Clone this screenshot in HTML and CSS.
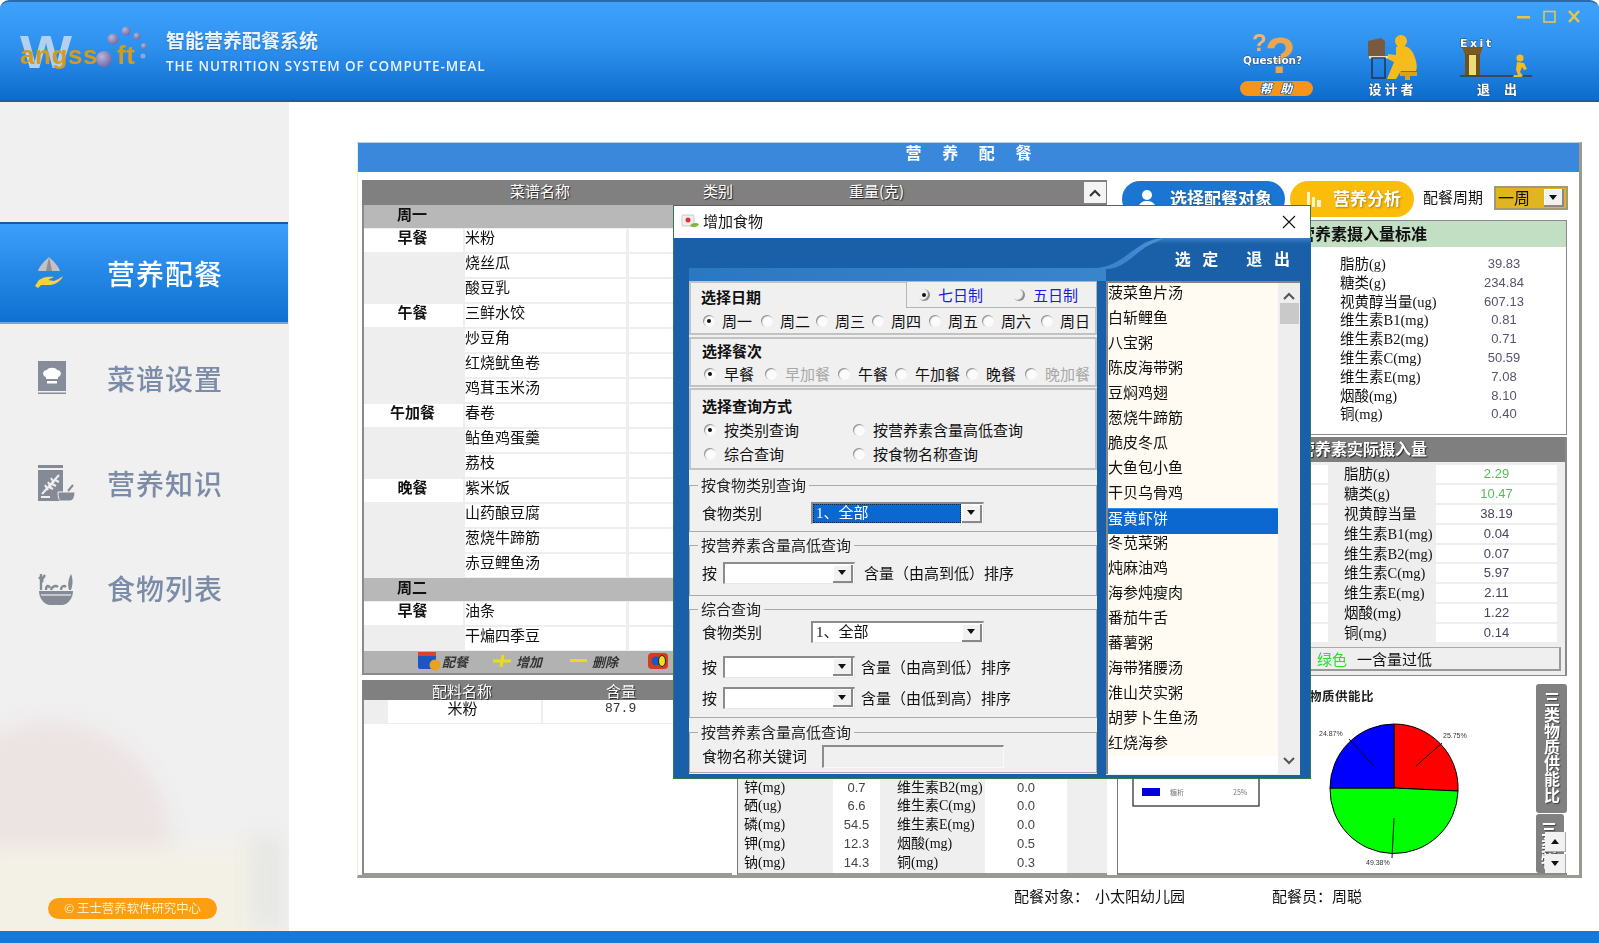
FILE: index.html
```html
<!DOCTYPE html>
<html lang="zh">
<head>
<meta charset="utf-8">
<title>智能营养配餐系统</title>
<link rel="stylesheet" href="styles.css">
</head>
<body>
<div class="app">
  <header class="topbar">
    <svg class="logo" viewBox="16 14 134 62" width="134" height="62">
      <defs><radialGradient id="ball" cx="35%" cy="35%" r="70%"><stop offset="0" stop-color="#b9b6d8"/><stop offset="1" stop-color="#6d6aa8"/></radialGradient></defs>
      <text x="20" y="68" class="logo-w" textLength="52" lengthAdjust="spacingAndGlyphs">W</text>
      <text x="20" y="64" class="logo-a">angss</text>
      <circle cx="104" cy="59" r="8" fill="url(#ball)"/>
      <text x="117" y="64" class="logo-a">ft</text>
      <circle cx="113" cy="39" r="5.5" fill="url(#ball)"/>
      <circle cx="126" cy="31" r="4.5" fill="url(#ball)"/>
      <circle cx="137" cy="36" r="3.5" fill="url(#ball)"/>
      <circle cx="144" cy="46" r="3" fill="url(#ball)"/>
      <circle cx="143" cy="56" r="2.5" fill="#8fa6d6"/>
    </svg>
    <div class="brand">
      <div class="brand-cn">智能营养配餐系统</div>
      <div class="brand-en">THE NUTRITION SYSTEM OF COMPUTE-MEAL</div>
    </div>
    <div class="tools">
      <svg class="tool-help" viewBox="1236 0 80 102" width="80" height="102">
        <text x="1252" y="51" class="q-small">?</text>
        <text x="1265" y="73" class="q-big">?</text>
        <text x="1243" y="64" class="q-text">Question?</text>
        <rect x="1240" y="81" width="73" height="15" rx="7.5" fill="#f7941a"/>
        <text x="1276" y="93" class="tool-label small">帮 助</text>
      </svg>
      <svg class="tool-design" viewBox="1360 0 65 102" width="65" height="102">
        <path d="M1368 41l13-3 4 3v15h-17z" fill="#7a5a3c"/>
        <rect x="1369" y="56" width="27" height="2.5" fill="#e8e2c8"/>
        <rect x="1372" y="58" width="13" height="20" fill="none" stroke="#20304a" stroke-width="1.4"/>
        <circle cx="1401" cy="41" r="6" fill="#f6bc1c"/>
        <path d="M1396 47c5-3 14-1 17 6 3 6 5 14 3 18h-15l-5 8h-9l7-17-6-3v-5l8 1z" fill="#f6bc1c"/>
        <path d="M1400 72h17v4h-7v4h-5v-4h-5z" fill="#d9a414"/>
        <text x="1391" y="94" class="tool-label">设 计 者</text>
      </svg>
      <svg class="tool-exit" viewBox="1455 0 80 102" width="80" height="102">
        <text x="1460" y="47" class="exit-text">Exit</text>
        <path d="M1462 47h21l-3 8h-15z" fill="#7a5a22"/>
        <rect x="1465" y="54" width="15" height="22" fill="#6b5220"/>
        <rect x="1469" y="55" width="7" height="21" fill="#efdc78"/>
        <rect x="1460" y="75" width="72" height="2" fill="#3a4a5a"/>
        <circle cx="1520" cy="58" r="3.6" fill="#f6bc1c"/>
        <path d="M1517 62l7 1 3 6-3 1-2-3-2 5 3 4-2 1h-8l1-2h4l-2-5z" fill="#f6bc1c"/>
        <text x="1497" y="94" class="tool-label">退 出</text>
      </svg>
    </div>
    <svg class="winctl" viewBox="0 0 68 16" width="68" height="16">
      <rect x="2" y="8" width="13" height="2.5" fill="#e4c648"/>
      <rect x="29" y="3.5" width="11" height="10.5" fill="none" stroke="#e4c648" stroke-width="1.6"/>
      <line x1="54" y1="3" x2="64" y2="14" stroke="#e4c648" stroke-width="2.6"/>
      <line x1="64" y1="3" x2="54" y2="14" stroke="#e4c648" stroke-width="2.6"/>
    </svg>
  </header>

  <div class="middle">
    <aside class="sidebar">
      <div class="side-deco deco-red"></div>
      <div class="side-deco deco-beige"></div>
      <div class="side-deco deco-gray"></div>
      <nav class="nav">
        <a class="nav-item active">
          <span class="nav-icon">
            <svg viewBox="0 0 32 36" width="32" height="36">
              <path d="M5 16C7 10 12 6 16 2c4 4 9 8 11 14z" fill="#c2c2c2"/>
              <path d="M16 2l-3 14h6z" fill="#8f8f92"/>
              <path d="M2 31l4-6c4-3 9-4 15-3l-6 3 6 1c3-1 6-3 9-5-2 5-7 8-12 9H8l-3 3z" fill="#f3d53a"/>
            </svg>
          </span>
          <span>营养配餐</span>
        </a>
        <a class="nav-item">
          <span class="nav-icon">
            <svg viewBox="0 0 30 36" width="30" height="36">
              <rect x="1" y="1" width="28" height="33" fill="#878d98"/>
              <rect x="1" y="31" width="28" height="1.5" fill="#f0f0f0"/>
              <path d="M9 17c-4-1-4-7 1-7 1-3 9-3 10 0 5 0 5 6 1 7v2H9z" fill="#fff"/>
              <rect x="10" y="21" width="10" height="2.5" fill="#fff"/>
            </svg>
          </span>
          <span>菜谱设置</span>
        </a>
        <a class="nav-item">
          <span class="nav-icon">
            <svg viewBox="0 0 38 38" width="38" height="38">
              <rect x="1" y="1" width="25" height="3" fill="#858b96"/>
              <rect x="1" y="6" width="25" height="31" fill="#858b96"/>
              <path d="M5 30L22 11M8 21l3 5M11 18l3 5M14 14l3 5M16 25l-4-2M19 22l-4-2M22 18l-4-2" stroke="#f0f0f0" stroke-width="2" fill="none"/>
              <rect x="4" y="32" width="9" height="2" fill="#f0f0f0"/>
              <path d="M21 28h17c0 5-2 9-5 9h-9c-2 0-3-4-3-9z" fill="#858b96" stroke="#f0f0f0"/>
              <path d="M31 27l5-6" stroke="#858b96" stroke-width="2"/>
            </svg>
          </span>
          <span>营养知识</span>
        </a>
        <a class="nav-item">
          <span class="nav-icon">
            <svg viewBox="0 0 38 36" width="38" height="36">
              <path d="M2 21h34c0 8-6 14-11 14H13C8 35 2 29 2 21z" fill="#858b96"/>
              <path d="M4 25h30" stroke="#f0f0f0" stroke-width="1.2"/>
              <path d="M4 20V4M2 7l4 5M8 5l-4 6M9 20c0-5 3-5 4-2M14 20c1-4 5-5 7-3M24 20c0-4 3-5 5-3" stroke="#858b96" stroke-width="2.4" fill="none"/>
              <path d="M32 20c-2-6 0-12 2-16 2 4 2 11 0 16z" fill="#858b96"/>
            </svg>
          </span>
          <span>食物列表</span>
        </a>
      </nav>
      <div class="copyright">© 王士营养软件研究中心</div>
    </aside>

    <main class="content">
      <section class="panel">
        <h1 class="panel-title">营 养 配 餐</h1>
        <div class="panel-body">
          <div class="col-left">
            <div class="menu-table">
              <div class="mt-head">
                <span class="mh-name">菜谱名称</span>
                <span class="mh-type">类别</span>
                <span class="mh-weight">重量(克)</span>
                <span class="scroll-up"><svg viewBox="0 0 12 8" width="12" height="8"><path d="M1 7l5-5 5 5" fill="none" stroke="#333" stroke-width="2"/></svg></span>
              </div>
              <div class="mt-day">周一</div>
              <div class="mt-row lead"><b>早餐</b><span>米粉</span><i></i></div>
              <div class="mt-row"><b></b><span>烧丝瓜</span><i></i></div>
              <div class="mt-row"><b></b><span>酸豆乳</span><i></i></div>
              <div class="mt-row lead"><b>午餐</b><span>三鲜水饺</span><i></i></div>
              <div class="mt-row"><b></b><span>炒豆角</span><i></i></div>
              <div class="mt-row"><b></b><span>红烧鱿鱼卷</span><i></i></div>
              <div class="mt-row"><b></b><span>鸡茸玉米汤</span><i></i></div>
              <div class="mt-row lead"><b>午加餐</b><span>春卷</span><i></i></div>
              <div class="mt-row"><b></b><span>鲇鱼鸡蛋羹</span><i></i></div>
              <div class="mt-row"><b></b><span>荔枝</span><i></i></div>
              <div class="mt-row lead"><b>晚餐</b><span>紫米饭</span><i></i></div>
              <div class="mt-row"><b></b><span>山药酿豆腐</span><i></i></div>
              <div class="mt-row"><b></b><span>葱烧牛蹄筋</span><i></i></div>
              <div class="mt-row"><b></b><span>赤豆鲤鱼汤</span><i></i></div>
              <div class="mt-day">周二</div>
              <div class="mt-row lead"><b>早餐</b><span>油条</span><i></i></div>
              <div class="mt-row"><b></b><span>干煸四季豆</span><i></i></div>
              <div class="mt-tools">
                <svg class="ti ti-peican" viewBox="0 0 24 22" width="24" height="22"><rect x="1" y="2" width="18" height="17" rx="2" fill="#1f55c0"/><rect x="1" y="2" width="18" height="4" fill="#d8432a"/><circle cx="18" cy="15" r="5.5" fill="#e8a220"/></svg>
                <span>配餐</span>
                <svg class="ti ti-add" viewBox="0 0 20 14" width="20" height="14"><path d="M1 7h18M11 1l-2 12" stroke="#e8dc20" stroke-width="3" fill="none"/></svg>
                <span>增加</span>
                <svg class="ti ti-del" viewBox="0 0 18 6" width="18" height="6"><rect x="0" y="1" width="17" height="3" fill="#e8dc20"/></svg>
                <span>删除</span>
                <svg class="ti ti-co" viewBox="0 0 22 18" width="22" height="18"><rect x="1" y="1" width="20" height="16" rx="4" fill="#d83a1c"/><circle cx="9" cy="9" r="4.5" fill="#1f55c0"/><ellipse cx="15" cy="9" rx="3.5" ry="5.5" fill="#e8e020" stroke="#222"/></svg>
              </div>
            </div>
            <div class="lower">
              <div class="ingredients">
                <div class="ing-head"><span class="ih-a">配料名称</span><span class="ih-b">含量</span></div>
                <div class="ing-row"><em></em><span class="ir-a">米粉</span><span class="ir-b">87.9</span></div>
              </div>
              <div class="nutr-table">
                <div class="nt-row"><span>锌(mg)</span><span class="v">0.7</span><span class="l2">维生素B2(mg)</span><span class="v">0.0</span></div>
                <div class="nt-row"><span>硒(ug)</span><span class="v">6.6</span><span class="l2">维生素C(mg)</span><span class="v">0.0</span></div>
                <div class="nt-row"><span>磷(mg)</span><span class="v">54.5</span><span class="l2">维生素E(mg)</span><span class="v">0.0</span></div>
                <div class="nt-row"><span>钾(mg)</span><span class="v">12.3</span><span class="l2">烟酸(mg)</span><span class="v">0.5</span></div>
                <div class="nt-row"><span>钠(mg)</span><span class="v">14.3</span><span class="l2">铜(mg)</span><span class="v">0.3</span></div>
              </div>
            </div>
          </div>

          <div class="col-right">
            <div class="actions">
              <a class="pill pill-blue">
                <svg viewBox="0 0 20 20" width="20" height="20"><circle cx="10" cy="6" r="5" fill="#fff"/><path d="M1 20c1-7 5-8 9-8s8 1 9 8z" fill="#fff"/></svg>
                <span>选择配餐对象</span>
              </a>
              <a class="pill pill-orange">
                <svg viewBox="0 0 16 16" width="16" height="16"><path d="M1 1h3v15H1zM6 6h3v10H6zM11 9h4v7h-4z" fill="#fff3c8"/></svg>
                <span>营养分析</span>
              </a>
              <span class="period-label">配餐周期</span>
              <div class="period"><span>一周</span><i class="arrow-btn"></i></div>
            </div>

            <div class="std-panel">
              <h2>营养素摄入量标准</h2>
              <div class="std-rows">
                <div><span>脂肪(g)</span><em>39.83</em></div>
                <div><span>糖类(g)</span><em>234.84</em></div>
                <div><span>视黄醇当量(ug)</span><em>607.13</em></div>
                <div><span>维生素B1(mg)</span><em>0.81</em></div>
                <div><span>维生素B2(mg)</span><em>0.71</em></div>
                <div><span>维生素C(mg)</span><em>50.59</em></div>
                <div><span>维生素E(mg)</span><em>7.08</em></div>
                <div><span>烟酸(mg)</span><em>8.10</em></div>
                <div><span>铜(mg)</span><em>0.40</em></div>
              </div>
            </div>

            <div class="act-panel">
              <h2>营养素实际摄入量</h2>
              <div class="act-rows">
                <div><i></i><span>脂肪(g)</span><em class="low">2.29</em></div>
                <div><i></i><span>糖类(g)</span><em class="low">10.47</em></div>
                <div><i></i><span>视黄醇当量</span><em>38.19</em></div>
                <div><i></i><span>维生素B1(mg)</span><em>0.04</em></div>
                <div><i></i><span>维生素B2(mg)</span><em>0.07</em></div>
                <div><i></i><span>维生素C(mg)</span><em>5.97</em></div>
                <div><i></i><span>维生素E(mg)</span><em>2.11</em></div>
                <div><i></i><span>烟酸(mg)</span><em>1.22</em></div>
                <div><i></i><span>铜(mg)</span><em>0.14</em></div>
              </div>
              <div class="act-legend"><span class="green">绿色</span><span>一含量过低</span></div>
            </div>

            <div class="chart-box">
              <svg class="chart" viewBox="0 0 418 190" width="418" height="190">
                <text x="165" y="17" class="chart-title">三类物质供能比</text>
                <rect x="15" y="60" width="126" height="62" fill="#fff" stroke="#222" stroke-width="1.2"/>
                <rect x="24" y="85" width="18" height="7" fill="#00c000" stroke="#063"/>
                <rect x="24" y="104" width="18" height="8" fill="#0000d8"/>
                <text x="52" y="111" class="tiny">糖析</text>
                <text x="115" y="111" class="tiny">25%</text>
                <g transform="translate(-2 0)">
                  <path d="M278 104V40A64 64 0 0 1 342 107Z" fill="#f00" stroke="#000"/>
                  <path d="M278 104L342 107A64 64 0 0 1 214 104Z" fill="#0f0" stroke="#000"/>
                  <path d="M278 104H214A64 64 0 0 1 278 40Z" fill="#00f" stroke="#000"/>
                  <path d="M233 55l25 27M326 59l-26 23M278 134l-2 40" stroke="#111" fill="none"/>
                </g>
                <text x="201" y="52" class="tiny2">24.87%</text>
                <text x="325" y="54" class="tiny2">25.75%</text>
                <text x="248" y="181" class="tiny2">49.38%</text>
              </svg>
              <div class="vtabs">
                <div class="vtab vtab-a">三类物质供能比</div>
                <div class="vtab vtab-b">三类物质供能比</div>
              </div>
              <div class="spin">
                <span class="spin-btn"><i class="tri up"></i></span>
                <span class="spin-btn"><i class="tri"></i></span>
              </div>
            </div>
          </div>
        </div>
      </section>
      <div class="info-line">
        <span>配餐对象：</span><span class="who">小太阳幼儿园</span><span class="who2">配餐员：</span><span class="who3">周聪</span>
      </div>
    </main>
  </div>
  <footer class="bottombar"></footer>

  <div class="dialog">
    <div class="dlg-title">
      <svg viewBox="0 0 20 16" width="20" height="16"><rect x="1" y="2" width="12" height="11" rx="1" fill="#eee" stroke="#ccc"/><circle cx="7" cy="7" r="2.5" fill="#e03030"/><path d="M9 13c1-3 6-4 9-2-1 3-5 4-9 2z" fill="#7ab83a"/></svg>
      <span>增加食物</span>
      <svg class="dlg-x" viewBox="0 0 14 14" width="14" height="14"><path d="M1 1l12 12M13 1L1 13" stroke="#111" stroke-width="1.1"/></svg>
    </div>
    <div class="dlg-body">
      <div class="dlg-head">
        <svg class="wave" viewBox="0 0 637 43" width="637" height="43" preserveAspectRatio="none">
          <defs>
            <linearGradient id="strip" x1="0" x2="1" y1="0" y2="0"><stop offset="0" stop-color="#2b78c2"/><stop offset=".7" stop-color="#3a86cc"/><stop offset="1" stop-color="#9cc4e6"/></linearGradient>
            <linearGradient id="top" x1="0" x2="0" y1="0" y2="1"><stop offset="0" stop-color="#3b80c4"/><stop offset=".6" stop-color="#1a60a8"/></linearGradient>
          </defs>
          <rect x="0" y="0" width="637" height="43" fill="#1a60a8"/>
          <path d="M15 30H420C450 30 462 0 490 0H637V43H15z" fill="url(#strip)"/>
          <path d="M432 31C456 31 466 3 492 3H637V43H432z" fill="#1a60a8"/>
          <path d="M490 0H637V10H470z" fill="url(#top)"/>
        </svg>
        <span class="dlg-btn">选 定</span>
        <span class="dlg-btn">退 出</span>
      </div>
      <div class="dlg-main">
        <div class="dlg-form">
          <div class="sec sec-date">
            <div class="sec-title">选择日期</div>
            <div class="mode-tab">
              <label class="opt"><i class="radio dim on"></i>七日制</label>
              <label class="opt"><i class="radio dim"></i>五日制</label>
            </div>
            <div class="opts days">
              <label class="opt"><i class="radio on"></i>周一</label>
              <label class="opt"><i class="radio"></i>周二</label>
              <label class="opt"><i class="radio"></i>周三</label>
              <label class="opt"><i class="radio"></i>周四</label>
              <label class="opt"><i class="radio"></i>周五</label>
              <label class="opt"><i class="radio"></i>周六</label>
              <label class="opt"><i class="radio"></i>周日</label>
            </div>
          </div>
          <div class="sec sec-meal">
            <div class="sec-title">选择餐次</div>
            <div class="opts meals">
              <label class="opt"><i class="radio on"></i>早餐</label>
              <label class="opt off"><i class="radio"></i>早加餐</label>
              <label class="opt"><i class="radio"></i>午餐</label>
              <label class="opt"><i class="radio"></i>午加餐</label>
              <label class="opt"><i class="radio"></i>晚餐</label>
              <label class="opt off"><i class="radio"></i>晚加餐</label>
            </div>
          </div>
          <div class="sec sec-query">
            <div class="sec-title">选择查询方式</div>
            <div class="opts query">
              <label class="opt"><i class="radio on"></i>按类别查询</label>
              <label class="opt"><i class="radio"></i>按营养素含量高低查询</label>
              <label class="opt"><i class="radio"></i>综合查询</label>
              <label class="opt"><i class="radio"></i>按食物名称查询</label>
            </div>
          </div>
          <fieldset class="fs fs-a">
            <legend>按食物类别查询</legend>
            <div class="fs-row">
              <span class="lab-cat">食物类别</span>
              <div class="sel sel-wide selected"><span class="sel-text"><u>1、全部</u></span><i class="arrow-btn"></i></div>
            </div>
          </fieldset>
          <fieldset class="fs fs-b">
            <legend>按营养素含量高低查询</legend>
            <div class="fs-row">
              <span class="lab-an">按</span>
              <div class="sel sel-narrow"><span class="sel-text"></span><i class="arrow-btn"></i></div>
              <span class="lab-sort">含量（由高到低）排序</span>
            </div>
          </fieldset>
          <fieldset class="fs fs-c">
            <legend>综合查询</legend>
            <div class="fs-row">
              <span class="lab-cat">食物类别</span>
              <div class="sel sel-wide"><span class="sel-text">1、全部</span><i class="arrow-btn"></i></div>
            </div>
            <div class="fs-row r2">
              <span class="lab-an">按</span>
              <div class="sel sel-narrow"><span class="sel-text"></span><i class="arrow-btn"></i></div>
              <span class="lab-sort">含量（由高到低）排序</span>
            </div>
            <div class="fs-row r3">
              <span class="lab-an">按</span>
              <div class="sel sel-narrow"><span class="sel-text"></span><i class="arrow-btn"></i></div>
              <span class="lab-sort">含量（由低到高）排序</span>
            </div>
          </fieldset>
          <fieldset class="fs fs-d">
            <legend>按营养素含量高低查询</legend>
            <div class="fs-row">
              <span class="lab-key">食物名称关键词</span>
              <div class="key-input"></div>
            </div>
          </fieldset>
        </div>
        <div class="food-list">
          <ul>
            <li>菠菜鱼片汤</li><li>白斩鲤鱼</li><li>八宝粥</li><li>陈皮海带粥</li><li>豆焖鸡翅</li><li>葱烧牛蹄筋</li><li>脆皮冬瓜</li><li>大鱼包小鱼</li><li>干贝乌骨鸡</li><li class="sel-item">蛋黄虾饼</li><li>冬苋菜粥</li><li>炖麻油鸡</li><li>海参炖瘦肉</li><li>番茄牛舌</li><li>蕃薯粥</li><li>海带猪腰汤</li><li>淮山芡实粥</li><li>胡萝卜生鱼汤</li><li>红烧海参</li>
          </ul>
          <div class="vscroll">
            <svg viewBox="0 0 12 8" width="12" height="8"><path d="M1 7l5-5 5 5" fill="none" stroke="#555" stroke-width="2"/></svg>
            <div class="thumb"></div>
            <svg class="down" viewBox="0 0 12 8" width="12" height="8"><path d="M1 1l5 5 5-5" fill="none" stroke="#555" stroke-width="2"/></svg>
          </div>
        </div>
      </div>
    </div>
  </div>
</div>
</body>
</html>
```

FILE: styles.css
```css
* { box-sizing: border-box; }
html, body { margin: 0; padding: 0; background: #fff; }
body {
  font-family: "Noto Sans CJK SC", "Noto Sans", sans-serif;
  font-size: 15px;
  color: #111;
  overflow: hidden;
}
i, em, u { font-style: normal; text-decoration: none; }
h1, h2 { margin: 0; font-weight: 700; }

.app { position: relative; width: 1599px; height: 943px; display: flex; flex-direction: column; overflow: hidden; filter: blur(0.35px); }

/* top bar */
.topbar {
  position: relative;
  height: 102px;
  flex: none;
  display: flex;
  align-items: flex-start;
  padding-left: 16px;
  background: linear-gradient(#3ea2fd 0%, #2f91ee 45%, #0c6ccd 100%);
  border-top: 2px solid #2a6cab;
  border-bottom: 2px solid #1b5f9f;
  border-radius: 9px 9px 0 0;
}
.logo { margin-top: 12px; flex: none; }
.logo-w { font: 700 46px "Liberation Sans", sans-serif; fill: #b2d1f0; }
.logo-a { font: 700 26px "Liberation Sans", sans-serif; fill: #d59a22; letter-spacing: 0.6px; }
.brand { margin-left: 16px; margin-top: 25px; color: #eaf3ff; }
.brand-cn { font-size: 19px; line-height: 26px; font-weight: 700; letter-spacing: 0; text-shadow: 0 1px 1px #2a6cab; }
.brand-en { margin-top: 3px; font: 600 13.5px/20px "Open Sans", sans-serif; letter-spacing: 0.9px; white-space: nowrap; }
.tools { margin-left: auto; margin-right: 64px; margin-top: -2px; display: flex; }
.tools svg { display: block; }
.tool-design { margin-left: 44px; }
.tool-exit { margin-left: 30px; }
.q-small { font: 700 24px "Liberation Sans", sans-serif; fill: #f3b46c; }
.q-big { font: 700 50px "Liberation Sans", sans-serif; fill: #eea64c; }
.q-text { font: 700 10.5px "DejaVu Sans", sans-serif; fill: #fff; paint-order: stroke; stroke: #2a4a70; stroke-width: 1px; }
.tool-label { font-family: "Noto Sans CJK SC", sans-serif; font-size: 13px; font-weight: 700; fill: #fff; text-anchor: middle; paint-order: stroke; stroke: #2560a0; stroke-width: 1.5px; }
.tool-label.small { font-size: 12px; font-style: italic; word-spacing: 6px; }
.tool-exit .tool-label { word-spacing: 11px; }
.exit-text { font: 700 11px "DejaVu Sans", sans-serif; letter-spacing: 2.5px; fill: #fff; paint-order: stroke; stroke: #2a4a70; stroke-width: 1px; }
.winctl { position: absolute; top: 6px; right: 16px; }

/* middle */
.middle { flex: 1; display: flex; min-height: 0; }
.sidebar {
  position: relative;
  flex: none;
  width: 289px;
  display: flex;
  flex-direction: column;
  background: #f0f0f0;
  padding-top: 120px;
  overflow: hidden;
}
.side-deco { position: absolute; filter: blur(10px); }
.deco-red { left: -70px; top: 620px; width: 240px; height: 240px; border-radius: 50%; background: #ece3e3; }
.deco-beige { left: -20px; top: 745px; width: 280px; height: 100px; background: #f3f1e6; }
.deco-gray { left: 252px; top: 735px; width: 30px; height: 90px; background: #e6e6e4; }
.nav { position: relative; display: flex; flex-direction: column; }
.nav-item {
  display: flex;
  align-items: center;
  height: 105.3px;
  padding-bottom: 4px;
  font-size: 28px;
  font-weight: 500;
  letter-spacing: 1px;
  color: #7b8ca8;
}
.nav-icon { width: 107px; flex: none; display: flex; padding-left: 37px; }
.nav-icon svg { display: block; }
.nav-item.active {
  width: 288px;
  height: 102px;
  margin-bottom: 3px;
  padding-bottom: 0;
  color: #fff;
  background: linear-gradient(#3c9ffb, #0e70d0);
  border-top: 2px solid #1a5a9a;
  border-bottom: 2px solid #6aa8e4;
}
.nav-item.active .nav-icon { padding-left: 33px; }
.copyright {
  position: relative;
  margin: auto 0 12px 48px;
  width: 169px;
  height: 21px;
  line-height: 21px;
  border-radius: 11px;
  background: #fb9e12;
  color: #fdf0c8;
  font-size: 12.4px;
  text-align: center;
}
.bottombar { flex: none; height: 12px; background: #1479d9; }

/* content */
.content { flex: 1; min-width: 0; padding: 40px 17px 0 68px; }
.panel {
  height: 736px;
  background: #fff;
  border-left: 1px solid #efedd8;
  border-right: 3px solid #9a9a92;
  border-bottom: 3px solid #9a9a92;
  border-top: 1px solid #b7cfe6;
}
.panel-title {
  height: 29px;
  background: #3a88dc;
  color: #fff;
  font-size: 16px;
  line-height: 18px;
  text-align: center;
  word-spacing: 17px;
}
.panel-body {
  display: grid;
  grid-template-columns: 745px 450px;
  column-gap: 10px;
  padding: 8px 0 0 4px;
  height: 703px;
}
.col-left, .col-right { display: flex; flex-direction: column; min-height: 0; }

.menu-table { height: 495px; border-left: 2px solid #8a8a8a; background: #f0f0f0; display: flex; flex-direction: column; }
.mt-head {
  height: 25px;
  flex: none;
  display: flex;
  align-items: center;
  margin-left: -2px;
  padding-bottom: 4px;
  background: #808080;
  color: #fff;
  text-shadow: 1px 1px 1px #222;
  line-height: 21px;
  position: relative;
}
.mh-name { margin-left: 148px; }
.mh-type { margin-left: 133px; }
.mh-weight { margin-left: 116px; }
.scroll-up { position: absolute; right: 1px; top: 2px; width: 22px; height: 21px; background: #f4f4f4; display: flex; align-items: center; justify-content: center; }
.scroll-up svg { display: block; }
.mt-day { height: 23px; flex: none; background: #b8b8b8; font-weight: 700; line-height: 17px; padding-left: 33px; color: #111; }
.mt-row { height: 25px; flex: none; display: flex; background: #eeeeee; line-height: 15px; }
.mt-row b { width: 99px; flex: none; height: 25px; text-align: center; font-size: 15px; padding-right: 2px; }
.mt-row.lead b { background: #fff; height: 23px; margin-top: 1px; line-height: 15px; }
.mt-row span { width: 161px; flex: none; background: #fff; margin: 1px 0 1px 2px; padding-left: 0; line-height: 15px; height: 23px; }
.mt-row i { flex: 1; background: #fff; margin: 1px 0 1px 3px; }
.mt-tools {
  height: 24px;
  flex: none;
  display: flex;
  align-items: center;
  background: #b2b2b2;
  border-bottom: 2px solid #8a8a8a;
  padding-bottom: 2px;
  font-size: 13px;
  font-weight: 700;
  font-style: italic;
  color: #333;
  padding-left: 53px;
}
.ti { flex: none; display: block; }
.mt-tools span { margin-left: 1px; }
.ti-add { margin-left: 24px; }
.mt-tools .ti-add + span { margin-left: 4px; }
.ti-del { margin-left: 28px; }
.mt-tools .ti-del + span { margin-left: 4px; }
.ti-co { margin-left: 29px; }

.lower { flex: 1; display: flex; gap: 5px; margin-top: 5px; min-height: 0; }
.ingredients { width: 370px; flex: none; border-left: 2px solid #8a8a8a; border-bottom: 2px solid #999; background: #fff; }
.ing-head { height: 20px; margin-left: -2px; margin-top: 0; background: #808080; color: #fff; line-height: 21px; text-shadow: 1px 1px 1px #222; display: flex; overflow: hidden; }
.ih-a { margin-left: 70px; }
.ih-b { margin-left: 114px; }
.ing-row { height: 24px; display: flex; background: #eee; line-height: 15px; }
.ing-row em { width: 24px; flex: none; }
.ir-a { width: 153px; flex: none; background: #fff; text-align: center; margin: 0 2px 1px 0; padding-right: 4px; }
.ir-b { flex: 1; background: #fff; margin-bottom: 1px; padding-left: 62px; font: 13px/17px "Liberation Mono", monospace; color: #333; }
.nutr-table {
  flex: 1;
  background: #efefef;
  border-left: 1px solid #777;
  display: flex;
  flex-direction: column;
  justify-content: flex-end;
  padding-bottom: 0;
  border-bottom: 2px solid #999;
}
.nt-row {
  height: 18.9px;
  display: grid;
  grid-template-columns: 95px 47px 105px 82px;
  font: 14px/18px "Liberation Serif", "Noto Sans CJK SC", serif;
  white-space: nowrap;
  padding-left: 0;
}
.nt-row span:first-child { padding-left: 6px; }
.nt-row .l2 { padding-left: 17px; }
.nt-row .v { background: #fff; text-align: center; font: 13px/18px "Liberation Sans", sans-serif; color: #444; }

/* right column */
.actions { height: 36px; margin-top: 1px; flex: none; display: flex; align-items: center; padding-left: 5px; }
.pill { height: 36px; border-radius: 18px; display: flex; align-items: center; color: #fff; font-size: 17px; font-weight: 700; text-shadow: 1px 1px 2px rgba(70,60,20,.45); flex: none; }
.pill span { margin-top: -4px; }
.pill-blue { width: 163px; background: #1a76d2; padding-left: 15px; gap: 13px; }
.pill-blue svg { display: block; }
.pill-orange { width: 124px; margin-left: 5px; background: #fcbc0a; padding-left: 16px; gap: 11px; }
.period-label { margin-left: 9px; width: 71px; flex: none; margin-top: -5px; }
.period { width: 74px; height: 24px; flex: none; display: flex; align-items: center; background: #e1b521; border: 2px solid #a09a78; padding: 1px 2px 1px 2px; font-size: 16px; color: #111; margin-top: -2px; }
.period span { flex: 1; line-height: 16px; margin-top: -2px; }

.arrow-btn { display: flex; align-items: center; justify-content: center; width: 20px; height: 18px; flex: none; background: #f1f1f1; border-right: 2px solid #888; border-bottom: 2px solid #888; box-shadow: inset 1px 1px 0 #fff; }
.arrow-btn::after { content: ""; border: 4.5px solid transparent; border-top: 5px solid #111; border-bottom: 0; }

.std-panel { height: 215px; flex: none; margin-top: 3px; background: #fff; border-top: 1px solid #8a8a8a; border-right: 1px solid #8a8a8a; border-bottom: 1px solid #8a8a8a; }
.std-panel h2, .act-panel h2 { font-size: 16px; line-height: 25px; padding-left: 182px; white-space: nowrap; }
.std-panel h2 { height: 26px; background: #c3dfc3; color: #111; }
.std-rows { padding: 8px 0 0 223px; }
.std-rows div { height: 18.8px; display: flex; font: 14.5px/18px "Liberation Serif", "Noto Sans CJK SC", serif; color: #111; }
.std-rows span { width: 110px; flex: none; white-space: nowrap; }
.std-rows em { width: 108px; text-align: center; font: 13px/18px "Liberation Sans", sans-serif; color: #55556a; }

.act-panel { height: 239px; flex: none; margin-top: 2px; background: #eeeeee; border-right: 2px solid #8a8a8a; border-bottom: 1px solid #8a8a8a; }
.act-panel h2 { height: 25px; background: #7f7f7f; color: #fff; text-shadow: 1px 1px 1px #222; line-height: 23px; }
.act-rows { padding: 3px 0 0 0; }
.act-rows div { height: 19.9px; display: flex; font: 14.5px/18px "Liberation Serif", "Noto Sans CJK SC", serif; color: #111; padding-right: 8px; }
.act-rows i { width: 211px; background: #fff; margin-bottom: 2px; flex: none; }
.act-rows span { width: 108px; flex: none; padding-left: 16px; white-space: nowrap; }
.act-rows em { flex: 1; background: #fff; margin-bottom: 2px; text-align: center; font: 13px/18px "Liberation Sans", sans-serif; color: #444460; }
.act-rows em.low { color: #5cb85c; }
.act-legend { height: 24px; margin: 3px 4px 0 0; display: flex; border: 1px solid #aaa; border-right: 2px solid #999; border-bottom: 2px solid #999; padding-left: 199px; line-height: 21px; background: #efefef; gap: 10px; }
.act-legend .green { color: #27e027; }

.chart-box { position: relative; flex: 1; margin-top: 8px; display: flex; background: #fff; border-left: 1px solid #777; border-bottom: 2px solid #8a8a8a; min-height: 0; overflow: hidden; height: 190px; }
.chart { display: block; flex: none; }
.chart-title { font: 700 12.5px "Noto Sans CJK SC", sans-serif; letter-spacing: .5px; fill: #222; }
.tiny { font: 7px "Noto Sans CJK SC", "Liberation Sans", sans-serif; fill: #777; }
.tiny2 { font: 7px "Liberation Sans", sans-serif; fill: #333; }
.vtabs { width: 32px; flex: none; display: flex; flex-direction: column; gap: 1px; }
.vtab { background: #808080; color: #fff; writing-mode: vertical-rl; font-weight: 700; font-size: 16px; line-height: 30px; border-radius: 3px; overflow: hidden; text-shadow: 1px 1px 1px #444; padding-top: 7px; }
.vtab-a { height: 129px; flex: none; width: 31px; }
.vtab-b { flex: 1; width: 28px; }
.spin { position: absolute; right: 1px; bottom: -1px; display: flex; flex-direction: column; gap: 2px; }
.spin-btn { display: flex; width: 21px; height: 20px; background: #f2f2f2; align-items: center; justify-content: center; border-right: 1px solid #aaa; border-bottom: 1px solid #aaa; }
.tri { border: 4.5px solid transparent; border-top: 5px solid #111; border-bottom: 0; }
.tri.up { border-top: 0; border-bottom: 5px solid #111; }

.info-line { display: flex; margin-top: 8px; padding-left: 657px; line-height: 20px; }
.who { margin-left: 6px; }
.who2 { margin-left: 87px; }
.who3 { margin-left: 0; }

/* dialog */
.dialog {
  position: absolute;
  left: 673px;
  top: 205px;
  width: 638px;
  height: 574px;
  background: #1a60a8;
  border: 1px solid #2f7a50;
  display: flex;
  flex-direction: column;
}
.dlg-title { height: 32px; flex: none; background: #fff; display: flex; align-items: center; padding: 0 0 3px 7px; gap: 2px; position: relative; }
.dlg-title svg { display: block; }
.dlg-x { position: absolute; right: 14px; top: 9px; }
.dlg-body { flex: 1; display: flex; flex-direction: column; min-height: 0; }
.dlg-head { position: relative; height: 43px; flex: none; display: flex; justify-content: flex-end; padding: 7px 20px 0 0; gap: 28px; color: #fff; font-weight: 700; font-size: 16px; line-height: 26px; }
.wave { position: absolute; left: 0; top: 0; display: block; }
.dlg-btn { position: relative; word-spacing: 8px; }
.dlg-main { flex: 1; display: flex; padding-left: 15px; min-height: 0; }
.dlg-form { width: 408px; flex: none; background: #f0f0f0; display: flex; flex-direction: column; height: 493px; }

.sec { background: #f0f0f0; border: 2px solid #c2c2c2; position: relative; flex: none; }
.sec-title { font-weight: 700; font-size: 15px; line-height: 20px; padding-left: 10px; }
.sec-date { height: 54px; padding-top: 4px; }
.sec-meal { height: 50px; margin-top: 2px; padding-top: 2px; }
.sec-meal .sec-title { padding-left: 11px; }
.sec-query { height: 82px; margin-top: 1px; padding-top: 6px; }
.sec-query .sec-title { padding-left: 11px; }
.mode-tab { position: absolute; right: -2px; top: -2px; width: 191px; height: 27px; border: 1px solid #b4b4b4; background: #f0f0f0; display: flex; align-items: center; padding-left: 11px; gap: 30px; color: #1a1ae0; }
.opts { display: grid; padding-left: 13px; line-height: 20px; }
.opt { display: flex; align-items: center; gap: 8px; white-space: nowrap; }
.opt.off { color: #a8a8a8; }
.radio { width: 12px; height: 12px; flex: none; border-radius: 50%; background: #fbfbfb; box-shadow: inset 1px 1px 1px #8a8a8a; position: relative; display: block; }
.radio.on::after { content: ""; position: absolute; left: 4px; top: 4px; width: 4px; height: 4px; border-radius: 50%; background: #111; }
.radio.dim { background: #f0f0f0; box-shadow: inset -2px -1px 1px #8a8a8a; }
.days { grid-template-columns: 58px 55px 56px 57px 53px 59px auto; margin-top: 4px; padding-left: 12px; }
.days .opt { gap: 7px; }
.meals { grid-template-columns: 61px 73px 57px 71px 59px auto; margin-top: 3px; }
.query { grid-template-columns: 149px auto; row-gap: 4px; margin-top: 4px; }

.fs { margin: 0; border: 1px solid #ababab; padding: 0; min-width: 0; flex: none; position: relative; }
.fs legend { padding: 0 3px; margin-left: 8px; line-height: 20px; height: 20px; color: #222; font-size: 15px; }
.fs-a { height: 57px; margin-top: 5px; }
.fs-b { height: 61px; margin-top: 3px; }
.fs-c { height: 119px; margin-top: 3px; }
.fs-d { height: 51px; margin-top: 4px; }
.fs-row { display: flex; align-items: center; height: 22px; margin-top: 7px; line-height: 20px; white-space: nowrap; }
.fs-row.r2 { margin-top: 12px; height: 23px; }
.fs-row.r3 { margin-top: 8px; height: 23px; }
.fs-c .fs-row:first-of-type { margin-top: 2px; }
.fs-d .fs-row { margin-top: 3px; }
.lab-cat { width: 121px; padding-left: 12px; flex: none; }
.lab-an { width: 33px; padding-left: 12px; flex: none; }
.lab-sort { margin-left: 9px; }
.fs-c .lab-sort { margin-left: 6px; }
.lab-key { width: 132px; padding-left: 12px; flex: none; }
.sel { display: flex; align-items: center; background: #fff; border-top: 2px solid #8c8c8c; border-left: 2px solid #8c8c8c; border-right: 1px solid #e8e8e8; border-bottom: 1px solid #e8e8e8; padding: 0 1px 0 0; height: 22px; flex: none; font-family: "Liberation Serif", "Noto Sans CJK SC", serif; }
.sel-wide { width: 173px; }
.sel-narrow { width: 132px; }
.sel-text { flex: 1; padding-left: 3px; line-height: 18px; font-family: "Liberation Serif", "Noto Sans CJK SC", serif; align-self: stretch; display: flex; min-width: 0; }
.selected .sel-text { background: #0a68d0; color: #fff; outline: 1px dotted #222; outline-offset: -1px; margin-right: 1px; }
.selected u { display: block; }
.key-input { width: 182px; height: 23px; border-top: 2px solid #8c8c8c; border-left: 2px solid #8c8c8c; border-right: 1px solid #fafafa; border-bottom: 1px solid #fafafa; background: #f0f0f0; }

.food-list { width: 194px; margin-left: 9px; flex: none; height: 493px; display: flex; background: #fff; border-left: 2px solid #858585; border-top: 2px solid #858585; box-shadow: 0 1px 0 #eee; }
.food-list ul { list-style: none; margin: 0; padding: 0; flex: 1; align-self: flex-start; background: #fffaf2; height: 473px; overflow: hidden; }
.food-list li { height: 25px; line-height: 18px; white-space: nowrap; }
.food-list .sel-item { background: #0a68d0; color: #fff; height: 26px; margin-bottom: -1px; line-height: 17px; border-top: 1px solid #3a8fe0; }
.vscroll { width: 22px; flex: none; background: #eeeeee; display: flex; flex-direction: column; align-items: center; padding-top: 9px; }
.vscroll svg { display: block; flex: none; }
.thumb { width: 19px; height: 21px; margin-top: 3px; background: #c9c9c9; flex: none; }
.vscroll .down { margin-top: auto; margin-bottom: 9px; }
```
